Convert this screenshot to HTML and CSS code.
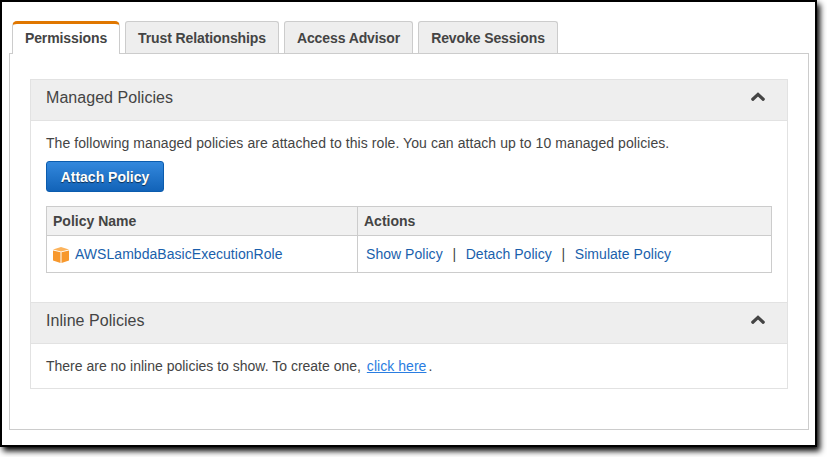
FILE: index.html
```html
<!DOCTYPE html>
<html lang="en">
<head>
<meta charset="utf-8">
<title>Role permissions</title>
<link rel="stylesheet" href="styles.css">
</head>
<body>
<main class="window">
  <nav class="tabs">
    <a class="tab tab-active"><span>Permissions</span></a>
    <a class="tab tab-trust"><span>Trust Relationships</span></a>
    <a class="tab tab-access"><span>Access Advisor</span></a>
    <a class="tab tab-revoke"><span>Revoke Sessions</span></a>
  </nav>
  <div class="panel">
    <section class="section managed">
      <header class="section-header">
        <h2>Managed Policies</h2>
        <svg class="chevron" viewBox="0 0 16 10"><path d="M2.8 7.2 8 2.4l5.2 4.8"/></svg>
      </header>
      <div class="section-body">
        <p class="intro">The following managed policies are attached to this role. You can attach up to 10 managed policies.</p>
        <button class="button">Attach Policy</button>
        <table class="policies">
          <thead><tr><th class="name-col">Policy Name</th><th>Actions</th></tr></thead>
          <tbody><tr>
            <td><div class="policy">
              <svg class="cube" viewBox="0 0 16 16">
                <path fill="#fcb35c" d="M0 2.6 8 0l8 2.6-8 2z"/>
                <path fill="#f7982d" d="M0 3.6l7.5 1.7V16L0 13.6zM16 3.6 8.5 5.3V16l7.5-2.4z"/>
              </svg>
              <a class="link">AWSLambdaBasicExecutionRole</a>
            </div></td>
            <td><div class="actions">
              <a class="link">Show Policy</a><span class="bar">|</span><a class="link">Detach Policy</a><span class="bar">|</span><a class="link">Simulate Policy</a>
            </div></td>
          </tr></tbody>
        </table>
      </div>
    </section>
    <section class="section inline">
      <header class="section-header">
        <h2>Inline Policies</h2>
        <svg class="chevron" viewBox="0 0 16 10"><path d="M2.8 7.2 8 2.4l5.2 4.8"/></svg>
      </header>
      <div class="section-body">
        <p class="empty">There are no inline policies to show. To create one, <a class="create">click here</a>.</p>
      </div>
    </section>
  </div>
</main>
</body>
</html>
```
FILE: styles.css
```css
* { box-sizing: border-box; }
html { height: 100%; overflow: hidden; background: #fff; }
body {
  margin: 0;
  height: 457px;
  color: #444;
  font: 14px/18px "Liberation Sans", Arial, sans-serif;
}
h2, p { margin: 0; }
.window {
  width: 817px;
  height: 447px;
  padding: 19px 6px 0 7px;
  border: 2px solid #000;
  background: #fff;
  box-shadow: 3px 4px 6px 0 #000;
}
.tabs { display: flex; gap: 5px; padding-left: 3px; }
.tab {
  height: 32px;
  border: 1px solid #ccc;
  border-bottom: 0;
  border-radius: 3px 3px 0 0;
  background: #eee;
  font-weight: bold;
  letter-spacing: -.1px;
  line-height: 32px;
  text-align: center;
  white-space: nowrap;
}
.tab-active {
  width: 108px;
  height: 33px;
  margin-bottom: -1px;
  border-top: 3px solid #e07700;
  border-radius: 5px 5px 0 0;
  background: #fff;
  line-height: 28px;
  position: relative;
}
.tab-trust { width: 154px; }
.tab-access { width: 129px; }
.tab-revoke { width: 140px; }
.panel {
  width: 800px;
  height: 377px;
  padding: 25px 20px 0;
  border: 1px solid #ccc;
}
.section { border: 1px solid #e2e2e2; border-bottom: 0; }
.managed { height: 223px; }
.inline { height: 87px; border-bottom: 1px solid #e2e2e2; }
.section-header {
  display: flex;
  justify-content: space-between;
  height: 41px;
  padding: 8px 20px 0 15px;
  border-bottom: 1px solid #e2e2e2;
  background: #eee;
}
h2 { font-size: 16px; font-weight: normal; line-height: 20px; letter-spacing: .05px; }
.chevron { width: 16px; height: 10px; margin-top: 4px; margin-right: .6px; fill: none; stroke: #444; stroke-width: 3.2; stroke-linecap: round; }
.section-body { padding: 13px 15px 0; }
.intro { white-space: nowrap; letter-spacing: .07px; }
.button {
  display: block;
  width: 118px;
  height: 31px;
  margin: 9px 0 14px;
  padding: 0;
  border: 1px solid #0b5cae;
  border-radius: 3px;
  background: linear-gradient(#3388dd, #1263b8);
  color: #fff;
  font: bold 14px/31px "Liberation Sans", Arial, sans-serif;
  text-shadow: 0 1px 1px rgba(0, 0, 0, .6);
}
.policies { width: 726px; height: 67px; border-collapse: collapse; table-layout: fixed; }
.policies th, .policies td { padding: 0 6px; border: 1px solid #ccc; text-align: left; }
.policies th { height: 29px; background: #f1f1f1; }
.policies td { height: 37px; }
.name-col { width: 311px; }
.policy { display: flex; align-items: center; gap: 6px; }
.cube { width: 16px; height: 16px; margin-top: 2px; }
.link { color: #1a5fac; letter-spacing: .04px; }
.actions { display: flex; padding-left: 2px; }
.bar { width: 23px; text-align: center; }
.create { margin-left: 2px; margin-right: 2px; color: #2a7de1; text-decoration: underline; letter-spacing: .05px; }
```
